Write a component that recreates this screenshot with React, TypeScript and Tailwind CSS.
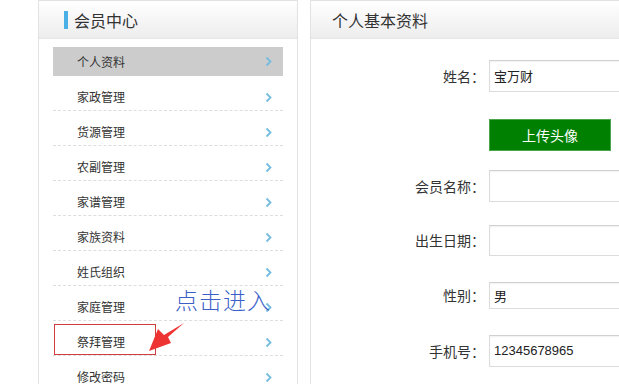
import React from 'react'

const menu = [
  '个人资料',
  '家政管理',
  '货源管理',
  '农副管理',
  '家谱管理',
  '家族资料',
  '姓氏组织',
  '家庭管理',
  '祭拜管理',
  '修改密码',
]

const cjk = { fontFamily: '"Noto Sans CJK SC", "Liberation Sans", sans-serif' }

function Chevron() {
  return (
    <svg width="8" height="11" viewBox="0 0 8 11" className="shrink-0">
      <path d="M1.5 1.5 L5.5 5.5 L1.5 9.5" fill="none" stroke="#74bce0" strokeWidth="1.8" />
    </svg>
  )
}

function Field({ label, value, top, h = 'h-[32px]', num = false }: { label: string; value?: string; top: string; h?: string; num?: boolean }) {
  return (
    <div className={`flex items-center ${top}`}>
      <div className="w-[174px] text-right text-[14px] text-[#333]">{label}</div>
      <div
        className={`ml-[4px] w-[200px] ${h} flex items-center pl-[4px] border border-[#dcdcdc] border-t-[#d0d0d0] bg-white text-[13px] text-[#222] shadow-[inset_0_1px_2px_rgba(0,0,0,0.06)]`}
        style={num ? { fontFamily: '"Liberation Sans", sans-serif' } : undefined}
      >
        {value}
      </div>
    </div>
  )
}

export default function App() {
  return (
    <div className="relative w-[619px] h-[384px] overflow-hidden bg-white flex pl-[38px] gap-[12px]" style={cjk}>
      {/* left panel */}
      <div className="w-[260px] shrink-0 h-[420px] border border-[#e2e2e2]">
        <div className="h-[38px] bg-linear-to-b from-white to-[#ededed] border-b border-[#e6e6e6] flex items-center pl-[25px]">
          <span className="w-[4px] h-[18px] bg-[#4ab0e6]" />
          <span className="ml-[6px] text-[16px] text-[#333]">会员中心</span>
        </div>
        <div className="px-[14px] pt-[8px]">
          {menu.map((m, i) =>
            i === 0 ? (
              <div key={m} className="h-[29px] bg-[#cccccc] flex items-center justify-between pl-[24px] pr-[10px] text-[12px] text-[#333]">
                <span>{m}</span>
                <Chevron />
              </div>
            ) : (
              <div
                key={m}
                className="h-[35px] pt-[8px] flex items-center justify-between pl-[24px] pr-[10px] text-[12px] text-[#333] border-b border-dashed border-[#dddddd]"
              >
                <span>{m}</span>
                <Chevron />
              </div>
            )
          )}
        </div>
      </div>

      {/* right panel */}
      <div className="flex-1 h-[420px] border border-r-0 border-[#e2e2e2]">
        <div className="h-[38px] bg-linear-to-b from-white to-[#ededed] border-b border-[#e6e6e6] flex items-center pl-[21px]">
          <span className="text-[16px] text-[#333]">个人基本资料</span>
        </div>
        <div className="flex flex-col">
          <Field label="姓名：" value="宝万财" top="mt-[21px]" />
          <div className="flex mt-[27px]">
            <div className="w-[178px]" />
            <button className="w-[122px] h-[32px] bg-[#008000] border border-[#4ca64c] text-white text-[14px]">上传头像</button>
          </div>
          <Field label="会员名称：" top="mt-[19px]" />
          <Field label="出生日期：" top="mt-[23px]" h="h-[31px]" />
          <Field label="性别：" value="男" top="mt-[26px]" h="h-[27px]" />
          <Field label="手机号：" value="12345678965" top="mt-[26px]" num />
        </div>
      </div>

      {/* annotation overlay */}
      <div className="absolute left-[54px] top-[324px] w-[102px] h-[31px] border border-[#d23c3c]" />
      <div className="absolute left-[175px] top-[288px] text-[23px] font-light text-[#3b5fc8] leading-none tracking-[1px]">点击进入</div>
      <svg className="absolute left-[140px] top-[315px]" width="50" height="45" viewBox="0 0 50 45">
        <polygon points="44,8 28,22 31,28 9,36 18,14 24,20" fill="#ee3333" />
      </svg>
    </div>
  )
}
